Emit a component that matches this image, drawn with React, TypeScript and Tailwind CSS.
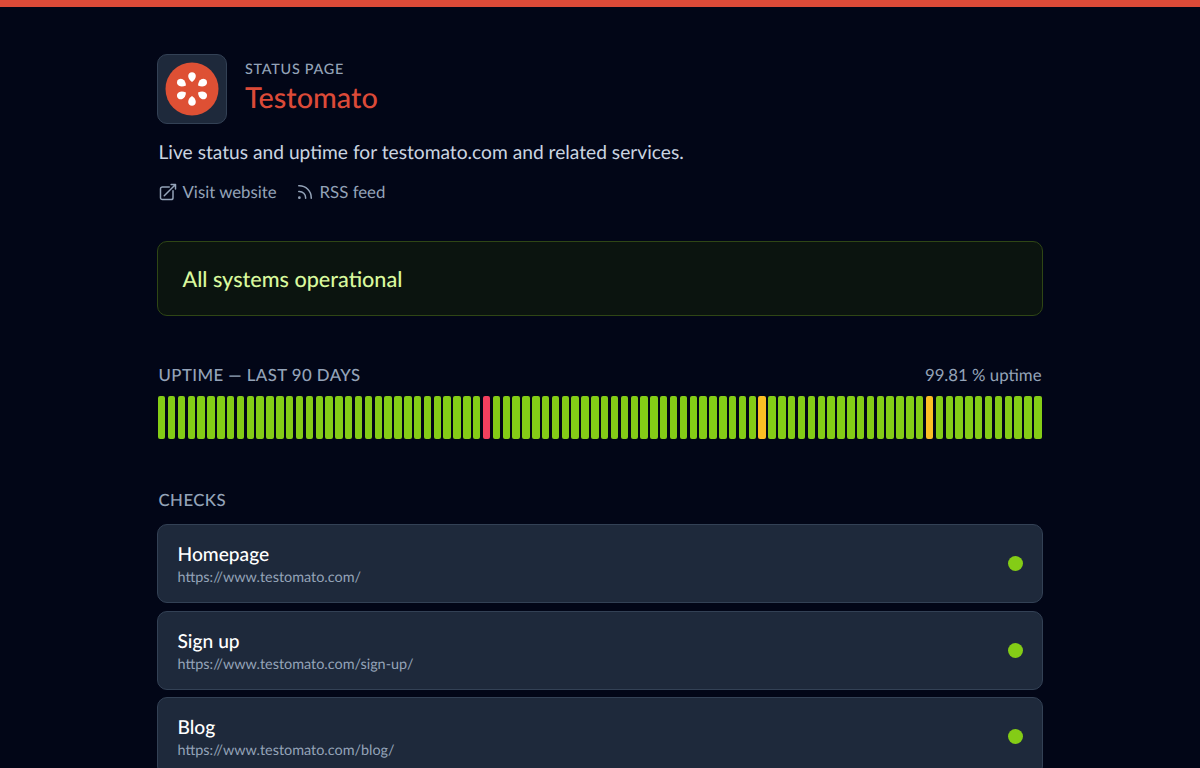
const checks = [
  { name: "Homepage", url: "https://www.testomato.com/" },
  { name: "Sign up", url: "https://www.testomato.com/sign-up/" },
  { name: "Blog", url: "https://www.testomato.com/blog/" },
];

const days = Array.from({ length: 90 }, (_, i) => {
  if (i === 33) return "down";
  if (i === 61 || i === 78) return "degraded";
  return "up";
});

const dayColors: Record<string, string> = {
  up: "bg-[#84cc16]",
  degraded: "bg-[#fbbf24]",
  down: "bg-[#f43f5e]",
};

function Logo() {
  return (
    <svg className="size-[54px]" viewBox="-27 -27 54 54">
      <circle r="26.5" fill="#de5034" />
      {[0, 60, 120, 180, 240, 300].map((angle) => (
        <path
          key={angle}
          transform={`rotate(${angle})`}
          fill="#fff"
          d="M0 -7C-2.2 -8.4 -3.8 -10.6 -3.8 -12.9C-3.8 -15.1 -2.1 -16.8 0 -16.8C2.1 -16.8 3.8 -15.1 3.8 -12.9C3.8 -10.6 2.2 -8.4 0 -7Z"
        />
      ))}
    </svg>
  );
}

function OutlineIcon({ d }: { d: string }) {
  return (
    <svg
      className="size-[20px] shrink-0"
      viewBox="0 0 24 24"
      fill="none"
      stroke="currentColor"
      strokeWidth={1.8}
      strokeLinecap="round"
      strokeLinejoin="round"
    >
      <path d={d} />
    </svg>
  );
}

export default function App() {
  return (
    <div className="h-screen overflow-hidden border-t-[7px] border-[#dc4a38] bg-[#020617] font-[Lato,Carlito,sans-serif] text-[#94a3b8] [text-rendering:geometricPrecision]">
      <div className="mx-auto w-[886px] pt-[47px]">
        {/* Header */}
        <header>
          <div className="flex items-center gap-[18px]">
            <div className="flex size-[70px] items-center justify-center rounded-[10px] border border-[#334155] bg-[#1e293b]">
              <Logo />
            </div>
            <div className="pb-px">
              <p className="text-[14.4px] leading-5 font-medium tracking-[0.72px] uppercase">Status page</p>
              <h1 className="text-[28.8px] leading-[37px] font-medium text-[#dc4a38]">Testomato</h1>
            </div>
          </div>
          <p className="mt-[14px] pl-[1.5px] text-[19.2px] leading-[30px] text-[#cbd5e1]">
            Live status and uptime for testomato.com and related services.
          </p>
          <div className="mt-[11px] flex gap-[18.5px] pl-px text-[16.8px] leading-[25px]">
            <a className="flex items-center gap-[4.5px]">
              <OutlineIcon d="M13.5 6H5.25A2.25 2.25 0 0 0 3 8.25v10.5A2.25 2.25 0 0 0 5.25 21h10.5A2.25 2.25 0 0 0 18 18.75V10.5m-10.5 6L21 3m0 0h-5.25M21 3v5.25" />
              <span>Visit website</span>
            </a>
            <a className="flex items-center gap-[4.5px]">
              <OutlineIcon d="M12.75 19.5v-.75a7.5 7.5 0 0 0-7.5-7.5H4.5m0-6.75h.75c7.87 0 14.25 6.38 14.25 14.25v.75M6 18.75a.75.75 0 1 1-1.5 0 .75.75 0 0 1 1.5 0Z" />
              <span>RSS feed</span>
            </a>
          </div>
        </header>

        {/* Overall status */}
        <div className="mt-[37px] flex h-[75px] items-center rounded-[10px] border border-[#2f4615] bg-[#0b140f] px-[24.5px] pt-px text-[21.6px] font-medium text-[#d9f99d]">
          <span>All systems operational</span>
        </div>

        {/* Uptime history */}
        <section className="mt-[46px]">
          <div className="flex items-center justify-between px-[1.5px] text-[16.8px] leading-[26px]">
            <h2 className="font-medium tracking-[0.43px] uppercase">Uptime — last 90 days</h2>
            <span>99.81 % uptime</span>
          </div>
          <div className="mx-px mt-[8px] flex h-[43px] gap-[2.4px]">
            {days.map((status, i) => (
              <div key={i} className={`flex-1 rounded-[2px] ${dayColors[status]}`} />
            ))}
          </div>
        </section>

        {/* Checks */}
        <section className="mt-[48px]">
          <h2 className="pl-[1.5px] text-[16.8px] leading-[26px] font-medium tracking-[0.43px] uppercase">Checks</h2>
          <div className="mt-[11.4px] flex flex-col gap-[7.4px]">
            {checks.map((check) => (
              <div
                key={check.name}
                className="flex h-[79px] items-center justify-between rounded-[10px] border border-[#334155] bg-[#1e293b] px-[19.5px]"
              >
                <div className="pt-[3px]">
                  <p className="text-[19.2px] leading-[26px] font-medium text-white">{check.name}</p>
                  <p className="text-[14.4px] leading-[20px]">{check.url}</p>
                </div>
                <span className="size-[15px] rounded-full bg-[#84cc16]" />
              </div>
            ))}
          </div>
        </section>
      </div>
    </div>
  );
}
